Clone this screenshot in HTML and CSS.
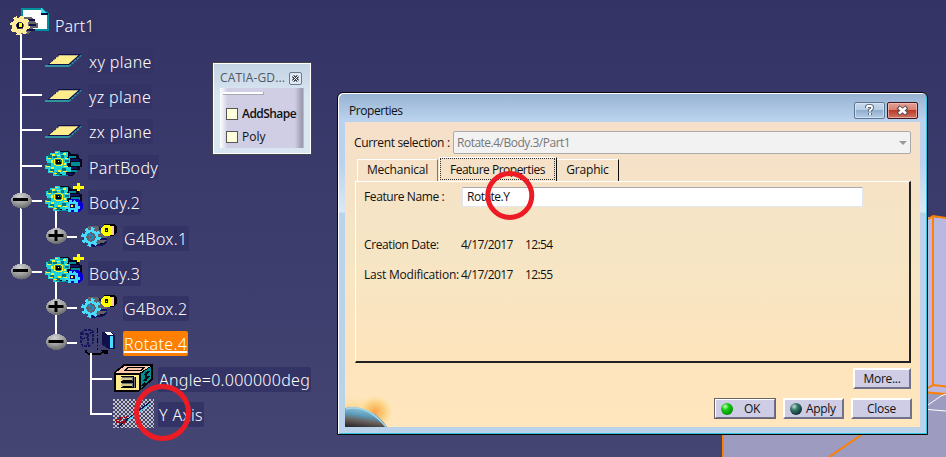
FILE: index.html
```html
<!DOCTYPE html>
<html lang="en">
<head>
<meta charset="utf-8">
<title>Properties</title>
<link rel="stylesheet" href="styles.css">
</head>
<body>
<svg class="defs" width="0" height="0">
  <defs>
    <radialGradient id="ball" cx=".42" cy=".25" r=".8"><stop offset="0" stop-color="#d2d2d2"/><stop offset=".5" stop-color="#a2a2a2"/><stop offset="1" stop-color="#606060"/></radialGradient>
    <radialGradient id="glow"><stop offset="0" stop-color="#ffa24c"/><stop offset=".3" stop-color="#fbbe66"/><stop offset=".6" stop-color="#fbd78c"/><stop offset="1" stop-color="#ffe5b8" stop-opacity="0"/></radialGradient>
    <linearGradient id="globe" x1=".6" y1="0" x2=".3" y2="1"><stop offset="0" stop-color="#9bd2e6"/><stop offset=".45" stop-color="#5b9ab8"/><stop offset=".7" stop-color="#69605c"/><stop offset="1" stop-color="#302d30"/></linearGradient>
    <pattern id="checker" width="4" height="4" patternUnits="userSpaceOnUse"><path d="M0 0h2v2H0zM2 2h2v2H2z" fill="#c4c4c4"/></pattern>
    <symbol id="plane" viewBox="0 0 37 14"><path d="M0 11h24v2H0z" fill="#30949f"/><path d="M24 12L36 1" stroke="#30949f" stroke-width="2.2" stroke-dasharray="2.5 1"/><path d="M14 1h20L24 10H4z" fill="#ffec8c"/><path d="M13 .7h22L24 10.5H3" fill="none" stroke="#10104c" stroke-width="1.2"/><path d="M4 9.5L14 1.5" stroke="#10104c" stroke-dasharray="2 1.5"/></symbol>
    <symbol id="body" viewBox="0 0 40 30" overflow="visible">
      <path d="M12 1h12l2 3h7l2 5h2v8h-2v3h-3l-4 6H13z" fill="#06061c"/>
      <path d="M14 2h9v2h-9zM24 6h7v2h-7zM26 12h9v4h-9zM24 20h8v2h-8zM14 25h9v1h-9z" fill="#008c96"/>
      <path d="M24 9h10v2H24zM25 17h7v2h-7zM21 23h7v2h-7z" fill="#14145c"/>
      <path d="M10 1h5v3h4V2h4v4l-2 2h4v5h-3v4h4v5h-5v3h-4v-1h-3v2H8v-3H3v-4H0v-4h2v-4H1V6h4V3h5z" fill="#1ed2d8"/>
      <path d="M3 5h4v3H3zM8 6h4v2H8zM16 5h3v3h-3zM2 13h4v3H2zM5 19h4v3H5zM17 18h4v3h-4zM11 22h4v3h-4zM20 10h4v2h-4z" fill="#05747f"/>
      <path d="M7 4h3v2H7zM12 5h3v1h-3zM18 3h3v2h-3zM2 8h4v1H2zM6 10h2v3H6zM20 8h3v1h-3zM1 16h4v1H1zM6 17h3v2H6zM4 21h4v1H4zM9 23h3v1H9zM13 20h3v2h-3zM19 16h4v1h-4zM18 21h4v1h-4zM19 13h2v2h-2zM10 2h3v1h-3z" fill="#f8f331"/>
      <path d="M10 8h6v1h2v6h-1v1h-6v-1H9V9h1z" fill="#f7f420"/><path d="M10 9h6v1h1v4h-1v1h-5v-1h-1z" fill="#087680"/><path d="M11 10h4v2h1v2h-5z" fill="#000"/><path d="M13 11h1v1h-1z" fill="#f7f420"/>
    </symbol>
    <symbol id="addbody" viewBox="0 0 40 30" overflow="visible">
      <use href="#body" width="40" height="30"/>
      <path d="M25 14h9l2 3 2 1v5l-4 4h-8l-3-3z" fill="#0000d5"/><path d="M22 19h2v-4h3v2l2-2 3 2h1v4h2v3h-2v3h-4v-2h-3v2h-3v-3h-3v-2h2z" fill="#3bdcff"/><path d="M25 19h5v4h-5z" fill="#10105c"/><path d="M26 20h2v2h-2z" fill="#ff0"/>
      <path d="M28 2.500h11M33.500 -2v8" stroke="#ff0" stroke-width="2.600"/>
    </symbol>
    <symbol id="box" viewBox="0 0 38 26">
      <path d="M8 3h9l12 8-4 8-6 4H8z" fill="#62626f"/><path d="M14 22h8l5-3M20 16h7M19 5l4 3M16 23l-7-1" stroke="#14145c" stroke-width="2"/>
      <circle cx="11" cy="14" r="6" fill="#62626f" stroke="#48dcff" stroke-width="2.7"/><circle cx="11" cy="14" r="8.4" fill="none" stroke="#48dcff" stroke-width="2.6" stroke-dasharray="3.2 3.4"/><path d="M9 11l5 3-4 3z" fill="none" stroke="#168bc8" stroke-width="1.2"/>
      <path d="M24 1h11l2 3v5l-4 4h-9z" fill="#000"/><path d="M30 3h4v9h-4z" fill="#ffc9ac"/><path d="M24 2h5l3 3v5l-3 3h-5l-3-3V5z" fill="#ff0"/><path d="M25 5h3v4h-3z" fill="#111"/><path d="M26 7h1v1h-1z" fill="#ff0"/>
    </symbol>
  </defs>
</svg>

<main class="viewport">
  <svg class="scene" width="946" height="457" viewBox="0 0 946 457">
    <path d="M723 430L920 388h26v69H723z" fill="#9d9bbf"/>
    <path d="M928 217h5l13 1v177l-18-2z" fill="#bab8e1"/>
    <g fill="none" stroke="#ff8000" stroke-width="2"><path d="M928 219l5-3 13 2M933 216v169M928 388l5-3 13 1.500M928 392.500l18 1.500M723 433v24M829 457l35-24"/></g>
    <path d="M928 405l13-9 5-2M928 409.500l18 1.500" fill="none" stroke="#fff"/>
  </svg>

  <nav class="tree">
    <svg class="branches" width="120" height="430" viewBox="0 0 120 430" fill="none" stroke="#fff" stroke-width="2">
      <path d="M21 34v237M21 59h21M21 95h21M21 130h21M21 166h21M31 201h11M31 272h11M56 211v25M56 282v60M66 237h11M66 308h11M66 343h11M91 353v61h21M91 379h21"/>
    </svg>
    <div class="row root"><svg class="icon" width="41" height="30" viewBox="0 0 41 30" shape-rendering="crispEdges"><path d="M14 2h20l6 5v16H14z" fill="#fff" stroke="#008f9c" stroke-width="2"/><path d="M33 1l7 6h-7z" fill="#46d9ed"/><path d="M33 7h7" stroke="#10104c" stroke-width="2"/><path d="M15 10h9l4 6h2v5h-5l-4 6h-9z" fill="#64646a"/><path d="M19 13h8M21 18h7M19 23h8" stroke="#10104c" stroke-width="2"/><circle cx="12" cy="18.500" r="6" fill="none" stroke="#ffec9a" stroke-width="4.500"/><circle cx="12" cy="18.500" r="8.600" fill="none" stroke="#ffec9a" stroke-width="2.600" stroke-dasharray="3.400 3.350"/><path d="M9 16h6v5H9z" fill="#000"/><path d="M11 16h3v4h-3z" fill="#ff0"/></svg><span class="label">Part1</span></div>
    <div class="row l1"><svg class="icon plane" width="37" height="14"><use href="#plane"/></svg><span class="label">xy plane</span></div>
    <div class="row l1"><svg class="icon plane" width="37" height="14"><use href="#plane"/></svg><span class="label">yz plane</span></div>
    <div class="row l1"><svg class="icon plane" width="37" height="14"><use href="#plane"/></svg><span class="label">zx plane</span></div>
    <div class="row l1"><svg class="icon body" width="40" height="30" shape-rendering="crispEdges"><use href="#body"/></svg><span class="label">PartBody</span></div>
    <div class="row l1"><svg class="icon body" width="40" height="30" shape-rendering="crispEdges"><use href="#addbody"/></svg><span class="label">Body.2</span></div>
    <div class="row l2"><svg class="icon box" width="38" height="26" shape-rendering="crispEdges"><use href="#box"/></svg><span class="label">G4Box.1</span></div>
    <div class="row l1"><svg class="icon body" width="40" height="30" shape-rendering="crispEdges"><use href="#addbody"/></svg><span class="label">Body.3</span></div>
    <div class="row l2"><svg class="icon box" width="38" height="26" shape-rendering="crispEdges"><use href="#box"/></svg><span class="label">G4Box.2</span></div>
    <div class="row l2 turn"><svg class="icon rotate" width="38" height="28" viewBox="0 0 38 28" shape-rendering="crispEdges"><path d="M1 5l4-3h7l1 2v11l-3 3H3l-2-3zM1 6h8l4-3M8 6v12M2 11l6-2" fill="none" stroke="#15155c" stroke-width="1.400" stroke-dasharray="3 1"/><path d="M17.500 0v22" stroke="#000" stroke-dasharray="5 2 1 2"/><path d="M22 4h9l4 4v13h-6l-7-4z" fill="#10104c"/><path d="M24 4h6l3 3h-6z" fill="#fff"/><path d="M30 8h3v12h-3z" fill="#49dcff"/><path d="M6 22v2l3 2h11l3-2h4" fill="none" stroke="#000" stroke-width="1.800"/><path d="M20 22h8v4h-3z" fill="#000"/></svg><span class="label selected">Rotate.4</span></div>
    <div class="row l3"><svg class="icon" width="40" height="29" viewBox="0 0 40 29" shape-rendering="crispEdges"><path d="M0 9L10 0h29v16L25 28H0z" fill="#000"/><path d="M2 9L11 2h26L26 9z" fill="#ffc9ad"/><path d="M12 6l3-3h16l-3 3z" fill="none" stroke="#000"/><path d="M27 10l10-7v12L27 25z" fill="#008e99"/><path d="M31 11l5-4M30 17l6-5M32 8v9M28 22l4-3" stroke="#111" stroke-width="2"/><path d="M2 11h23v15H2z" fill="#ffeb8b"/><path d="M8 13h13v11H8z" fill="#707078"/><path d="M7 12.500h13v5H7M7 18.500h13v5H7M21.500 13v11" fill="none" stroke="#000" stroke-width="1"/><path d="M7 14h11v2H7zM7 20h11v2H7z" fill="#d5c78c"/><path d="M9 16.500h9M9 22.500h9" stroke="#000"/></svg><span class="label wide">Angle=0.000000deg</span></div>
    <div class="row l3"><svg class="icon" width="41" height="29" viewBox="0 0 41 29" shape-rendering="crispEdges"><path d="M0 0h41v29H0z" fill="url(#checker)"/><path d="M6 27L37 3" stroke="#10104c" stroke-width="1.500"/><path d="M15 21L37 5" stroke="#49c9e9" stroke-width="1.500"/><path d="M2 22l5-3 7-1-2 4-5 2-3 3M6 18l6 7M3 23h9" fill="none" stroke="#a00a18" stroke-width="1.300" stroke-dasharray="4 1"/></svg><span class="label">Y Axis</span></div>
    <svg class="branches" width="120" height="430" viewBox="0 0 120 430">
      <g fill="url(#ball)" shape-rendering="crispEdges"><ellipse cx="21.500" cy="200.500" rx="10.500" ry="8"/><ellipse cx="21.500" cy="271.500" rx="10.500" ry="8"/><ellipse cx="56.500" cy="236" rx="10.500" ry="8"/><ellipse cx="56.500" cy="307" rx="10.500" ry="8"/><ellipse cx="56.500" cy="342" rx="10.500" ry="8"/></g>
      <path d="M13 199.500h15M13 270.500h15M48.500 235.500h15M56 230v11M48.500 306.500h15M56 301v11M48.500 341.500h15" fill="none" stroke="#000" stroke-width="3"/>
      <path d="M21 34v20M56 211v17M56 282v17M91 353v12" stroke="#fff" stroke-width="2"/>
    </svg>
  </nav>

  <section class="toolbox">
    <header><span>CATIA-GD...</span><svg width="13" height="13" viewBox="0 0 13 13"><rect x=".5" y=".5" width="12" height="12" rx="1.500" fill="#e0eaf5" stroke="#6a7890"/><path d="M4 4l5 5M9 4L4 9" stroke="#303848" stroke-width="3"/><path d="M4 4l5 5M9 4L4 9" stroke="#fff"/></svg></header>
    <div class="tools"><i class="grip"></i>
      <div class="tool bold"><i class="check"></i><span>AddShape</span></div>
      <div class="tool"><i class="check"></i><span>Poly</span></div>
    </div>
  </section>

  <section class="dialog">
    <header class="title"><span>Properties</span>
      <div class="controls">
        <svg width="31" height="17" viewBox="0 0 31 17"><defs><linearGradient id="hb" x2="0" y2="1"><stop stop-color="#c8daed"/><stop offset=".48" stop-color="#b6cde5"/><stop offset=".5" stop-color="#91aece"/><stop offset="1" stop-color="#b8d0e8"/></linearGradient><linearGradient id="cb" x2="0" y2="1"><stop stop-color="#e5a39a"/><stop offset=".48" stop-color="#d77e70"/><stop offset=".5" stop-color="#bb3a24"/><stop offset="1" stop-color="#d37a69"/></linearGradient></defs><rect x=".5" y=".5" width="30" height="16" rx="1.500" fill="url(#hb)" stroke="#5f7591"/><rect x="1.500" y="1.500" width="28" height="14" rx="1" fill="none" stroke="#dce9f5" stroke-opacity=".7"/><path d="M13 6V4.800q0-.8 1-.8h3q1 0 1 .8v1.500q0 1-2 2v1.400M16 11v2" fill="none" stroke="#505968" stroke-width="3.600"/><path d="M13 6V4.800q0-.8 1-.8h3q1 0 1 .8v1.500q0 1-2 2v1.400M16 11v2" fill="none" stroke="#fff" stroke-width="1.800"/></svg>
        <svg width="31" height="17" viewBox="0 0 31 17"><rect x=".5" y=".5" width="30" height="16" rx="1.500" fill="url(#cb)" stroke="#43151c"/><rect x="1.500" y="1.500" width="28" height="14" rx="1" fill="none" stroke="#f2c4bb" stroke-opacity=".7"/><path d="M11 5l9 7M20 5l-9 7" stroke="#54505a" stroke-width="4.500"/><path d="M12 5.500l7 6M19 5.500l-7 6" stroke="#fff" stroke-width="2.600"/></svg>
      </div>
    </header>
    <div class="content">
      <div class="selection"><span class="sel-label">Current selection :</span><div class="combo"><span>Rotate.4/Body.3/Part1</span><i class="arrow"></i></div></div>
      <div class="tabs"><div class="tab mechanical"><span>Mechanical</span></div><div class="tab active"><span>Feature Properties</span></div><div class="tab graphic"><span>Graphic</span></div></div>
      <div class="panel">
        <div class="field name"><span class="key">Feature Name :</span><div class="input"><span>Rotate.Y</span></div></div>
        <div class="field created"><span class="key">Creation Date:</span><span class="date">4/17/2017</span><span class="time">12:54</span></div>
        <div class="field modified"><span class="key">Last Modification:</span><span class="date">4/17/2017</span><span class="time">12:55</span></div>
      </div>
      <footer>
        <button class="btn more">More...</button>
        <div class="actions"><button class="btn ok"><i class="orb green"></i><span>OK</span></button><button class="btn apply"><i class="orb"></i><span>Apply</span></button><button class="btn close">Close</button></div>
      </footer>
      <svg class="planet" width="50" height="35" viewBox="0 0 50 35"><ellipse cx="8" cy="26" rx="40" ry="24" fill="url(#glow)" opacity=".5"/><ellipse cx="30" cy="20" rx="19" ry="18" fill="url(#glow)"/><path d="M0 16q11-3 24 3 10 4 18 16H0z" fill="url(#globe)"/><path d="M1 17q12-3 23 3 9 5 17 15" fill="none" stroke="#a4d6e8" stroke-width="1.500"/></svg>
    </div>
  </section>

  <svg class="marks" width="946" height="457" viewBox="0 0 946 457" fill="none" stroke="#ed1c24" stroke-width="5"><circle cx="509.800" cy="195.500" r="22"/><circle cx="162.500" cy="412.500" r="26"/></svg>
</main>
</body>
</html>
```
FILE: styles.css
```css
* { box-sizing: border-box; }
body { margin: 0; overflow: hidden; font: 12px/16px "Open Sans", "Noto Sans", sans-serif; color: #111; }
.defs { position: absolute; }
.viewport { position: relative; width: 946px; height: 457px; overflow: hidden; background: linear-gradient(#333366, #454573); }
.scene, .branches, .marks { position: absolute; left: 0; top: 0; pointer-events: none; }
span { white-space: nowrap; }

.tree { position: absolute; left: 0; top: 0; width: 330px; padding-top: 8px; }
.row { height: 35.4px; display: flex; align-items: center; }
.root { padding-left: 8px; }
.root .icon { margin: -7px 6px 0 0; }
.l1 { padding-left: 45px; }
.l2 { padding-left: 80px; }
.l3 { padding-left: 113px; width: max-content; }
.icon { flex: none; overflow: visible; }
.icon.plane { margin-right: 6px; }
.icon.body { margin: -5px 3px 0 0; }
.icon.box { margin: -4px 5px 0 0; }
.icon.rotate { margin: -3px 5px 0 0; }
.turn { padding-bottom: 2px; }
.l3 .icon { width: 41px; margin: -3px 4px 0 0; }
.label { height: 25px; padding: 0 1px; border-radius: 2px; font: 300 16px/26px "Noto Sans", "Open Sans", sans-serif; color: #fff; background: #333366; letter-spacing: .35px; }
.root .label { margin-left: -1px; letter-spacing: .15px; }
.wide { letter-spacing: .27px; }
.selected { background: #ff8000; text-decoration: underline; text-decoration-thickness: 2px; text-underline-offset: 1px; text-decoration-skip-ink: none; }

.toolbox { position: absolute; left: 212px; top: 62px; width: 100px; height: 93px; padding: 1px 7px 7px; border: 1px solid #444; background: linear-gradient(#c3d3e3, #d9e5f1 35%); box-shadow: inset 0 0 0 1px #fff; color: #4e5866; }
.toolbox header { height: 24px; padding-top: 4px; display: flex; align-items: center; justify-content: space-between; }
.toolbox header span { letter-spacing: .15px; }
.toolbox header svg { margin-right: 2px; }
.tools { height: 60px; padding: 4px 0 0 6px; background: linear-gradient(90deg, #fff, #cfcee5 9%, #cfcee5 89%, #9997aa 98%, #c5c4dc); color: #111; }
.grip { display: block; width: 41px; height: 3px; margin-left: -3px; border: solid #a8a8b4; border-width: 0 1px 1px 0; background: #fff; }
.tool { height: 23px; display: flex; align-items: center; gap: 4px; }
.tool:first-of-type { margin-top: 7px; }
.bold { font-weight: 600; letter-spacing: -.55px; }
.check { width: 12px; height: 12px; border: 1px solid #555; background: #ffffdc; }

.dialog { position: absolute; left: 337px; top: 92px; width: 591px; height: 343px; padding: 0 7px 7px; border: 1px solid #080808; border-radius: 6px 6px 0 0; background: linear-gradient(#96b2d1, #bad2ed 27px, #bad2ed 70px, #dbe8f5 119px, #bad2ea 120px); box-shadow: inset 1px 1px #fff, inset -1px -1px #32c4df; }
.title { height: 29px; padding: 5px 2px 0 4px; display: flex; justify-content: space-between; align-items: center; }
.title span { margin-top: 2px; letter-spacing: -.45px; }
.controls { display: flex; gap: 2px; }
.controls svg { display: block; }
.content { position: relative; height: 305px; padding-top: 9px; background: linear-gradient(#f5dfca, #f6e3c6 23%, #f5e5c5 40%, #fde4bd 75%, #ffe6bd); }
.selection { height: 23px; padding-left: 9px; display: flex; align-items: center; }
.sel-label { flex: none; width: 99px; letter-spacing: -.35px; }
.combo { flex: none; width: 458px; height: 23px; padding: 0 3px; border: 1px solid #aaa; border-radius: 2px; background: #f2f2f2; color: #777; display: flex; align-items: center; justify-content: space-between; letter-spacing: -.4px; }
.arrow { border: 4px solid transparent; border-top-color: #999; border-bottom: 0; }
.combo span { letter-spacing: -.5px; }
.tabs { height: 27px; padding-left: 12px; display: flex; align-items: flex-end; }
.tab { height: 22px; padding-top: 2px; text-align: center; border: solid #fff; border-width: 1px 0 0 1px; letter-spacing: -.2px; }
.mechanical { width: 81px; border-right: 1px solid #777; }
.active { width: 118px; height: 24px; margin-left: 1px; padding: 0 1px 1px 0; border-right: 1px solid #111; letter-spacing: -.5px; }
.active span { display: block; height: 22px; padding-top: 3px; border: 1px dotted #333; }
.graphic { width: 62px; border-left: 0; border-right: 1px solid #111; }
.panel { width: 556px; height: 182px; margin-left: 10px; padding: 5px 0 0 8px; border: 1px solid #fff; border-right: 2px solid #222; border-bottom: 2px solid #222; }
.field { display: flex; align-items: center; height: 20px; }
.key { width: 97px; letter-spacing: -.4px; }
.modified .key { letter-spacing: -.22px; }
.input { width: 401px; height: 20px; padding: 1px 4px; border: 1px solid #dfe6ef; border-top-color: #aaa; border-radius: 1px; background: #fff; margin-left: 1px; letter-spacing: -.5px; }
.created { margin-top: 28px; }
.modified { margin-top: 10px; }
.date { width: 64px; letter-spacing: -.55px; }
.time { letter-spacing: -.6px; }
footer { display: flex; flex-direction: column; align-items: flex-end; padding: 5px 8px 0 0; gap: 9px; }
.actions { display: flex; gap: 7px; }
.btn { height: 21px; padding: 0; border: 2px solid; border-color: #fff #71718a #71718a #fff; background: #cecde5; color: #111; font: inherit; line-height: 16px; text-align: center; letter-spacing: -.3px; }
.more { width: 58px; margin-right: 1px; }
.ok, .apply, .close { width: 61px; }
.ok, .apply { display: flex; align-items: center; }
.ok { width: 62px; outline: 1px solid #666; outline-offset: -1px; }
.orb { flex: none; width: 12px; height: 12px; margin-left: 5px; border-radius: 50%; background: radial-gradient(circle at 35% 30%, #caded8, #367969 30%, #102e35 75%); }
.green { background: radial-gradient(circle at 35% 30%, #cbffc5, #19cd15 30%, #008600 80%); }
.ok span { margin-left: 11px; }
.apply span { margin-left: 4px; }
.planet { position: absolute; left: 0; bottom: 0; overflow: hidden; }
```
